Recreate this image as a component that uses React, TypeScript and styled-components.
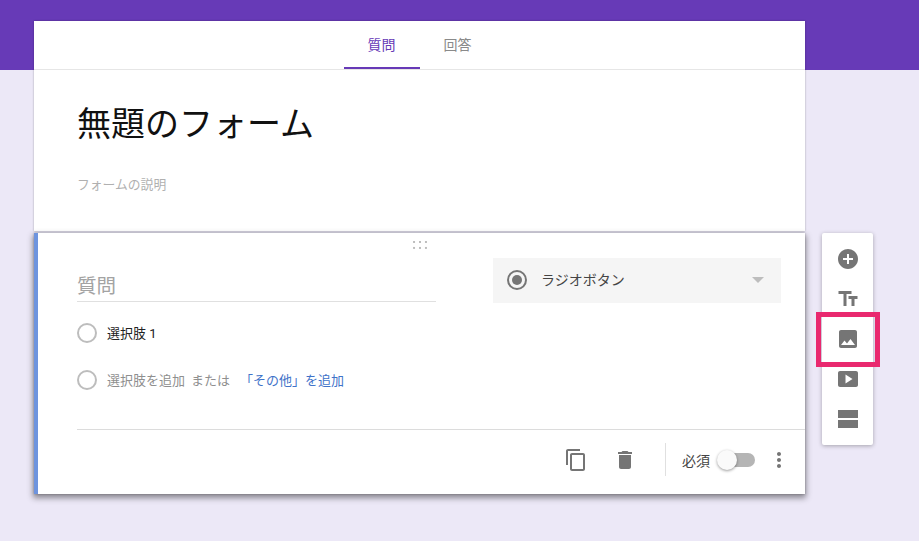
import React from 'react';
import styled, { createGlobalStyle } from 'styled-components';

const GlobalStyle = createGlobalStyle`
  html, body {
    margin: 0;
    height: 100%;
    overflow: hidden;
  }
  body {
    background: linear-gradient(#673ab7 70px, #ece8f7 70px);
    font-family: Roboto, "Noto Sans CJK JP", sans-serif;
  }
`;

const Page = styled.div`
  display: flex;
  align-items: flex-start;
  gap: 17px;
  padding: 21px 0 0 34px;
`;

const Column = styled.main`
  display: flex;
  flex-direction: column;
  width: 771px;
`;

const HeaderCard = styled.section`
  height: 210px;
  background: #fff;
  box-shadow: 0 0 2px rgba(0, 0, 0, 0.3);
`;

const Tabs = styled.nav`
  display: flex;
  justify-content: center;
  height: 48px;
  border-bottom: 1px solid #e6e6e6;
`;

const Tab = styled.div<{ $active?: boolean }>`
  display: flex;
  align-items: center;
  justify-content: center;
  width: 76px;
  height: 46px;
  margin-bottom: -1px;
  font-size: 14px;
  color: ${(p) => (p.$active ? '#673ab7' : '#8a8a8a')};
  border-bottom: 2px solid ${(p) => (p.$active ? '#673ab7' : 'transparent')};
`;

const HeaderBody = styled.div`
  padding: 26px 0 0 43px;
`;

const Title = styled.h1`
  margin: 0;
  font-size: 34px;
  font-weight: 400;
  line-height: 56px;
  color: #111;
`;

const Description = styled.p`
  margin: 24px 0 0;
  font-size: 12.8px;
  line-height: 18px;
  color: #b0b0b0;
`;

const QuestionCard = styled.section`
  height: 261px;
  margin-top: 2px;
  box-sizing: border-box;
  background: #fff;
  border-left: 4px solid #6e94de;
  box-shadow: 0 3px 6px 1px rgba(0, 0, 0, 0.42), 0 0 2px rgba(0, 0, 0, 0.25);
  display: flex;
  flex-direction: column;
`;

const Handle = styled.svg`
  display: block;
  align-self: center;
  width: 16px;
  height: 10px;
  margin: 7px 0 0 -3px;
`;

const QuestionBody = styled.div`
  display: flex;
  justify-content: space-between;
  padding: 8px 24px 0 39px;
  height: 180px;
  box-sizing: border-box;
`;

const Left = styled.div`
  width: 359px;
`;

const QuestionInput = styled.div`
  height: 30px;
  margin-top: 8px;
  padding-top: 5px;
  border-bottom: 1px solid #e0e0e0;
  font-size: 19.5px;
  line-height: 31px;
  color: #a3a3a3;
`;

const Option = styled.div<{ $top: number }>`
  display: flex;
  align-items: center;
  gap: 10px;
  height: 24px;
  margin-top: ${(p) => p.$top}px;
  font-size: 13px;
  color: #222;
  white-space: nowrap;
`;

const Radio = styled.span`
  display: block;
  flex: none;
  width: 16px;
  height: 16px;
  border: 2px solid #bdbdbd;
  border-radius: 50%;
`;

const Muted = styled.span<{ $gap?: number }>`
  color: #8f8f8f;
  margin-right: ${(p) => p.$gap ?? 0}px;
`;

const LinkText = styled.span`
  color: #3f73c9;
`;

const TypeSelect = styled.div`
  display: flex;
  align-items: center;
  width: 288px;
  height: 45px;
  padding: 0 17px 0 14px;
  box-sizing: border-box;
  background: #f5f5f5;
  font-size: 14px;
  color: #444;
`;

const SelectedRadio = styled.span`
  position: relative;
  flex: none;
  width: 16px;
  height: 16px;
  margin-right: 14px;
  border: 2px solid #757575;
  border-radius: 50%;

  &::after {
    content: '';
    position: absolute;
    inset: 3px;
    background: #757575;
    border-radius: 50%;
  }
`;

const SelectLabel = styled.span`
  flex: 1;
  margin-bottom: 3px;
`;

const Caret = styled.span`
  width: 0;
  height: 0;
  margin-bottom: 1px;
  border-left: 6.5px solid transparent;
  border-right: 6.5px solid transparent;
  border-top: 6.5px solid #bdbdbd;
`;

const Footer = styled.div`
  display: flex;
  align-items: center;
  justify-content: flex-end;
  height: 61px;
  margin-left: 39px;
  padding: 0 14px 4px 0;
  border-top: 1px solid #dcdcdc;
`;

const IconSlot = styled.span<{ $right: number }>`
  display: flex;
  margin-right: ${(p) => p.$right}px;
  color: #757575;
`;

const Separator = styled.span`
  width: 1px;
  height: 33px;
  margin-right: 16px;
  background: #e0e0e0;
`;

const RequiredLabel = styled.span`
  font-size: 14px;
  color: #444;
  margin-right: 8px;
`;

const Toggle = styled.span`
  position: relative;
  display: block;
  width: 34px;
  height: 14px;
  margin: 1px 12px 0 3px;
  background: #b5b5b5;
  border-radius: 7px;

  &::after {
    content: '';
    position: absolute;
    left: -4px;
    top: -3px;
    width: 20px;
    height: 20px;
    background: #fafafa;
    border-radius: 50%;
    box-shadow: 0 1px 3px rgba(0, 0, 0, 0.4);
  }
`;

const Toolbar = styled.aside`
  display: flex;
  flex-direction: column;
  width: 51px;
  margin-top: 212px;
  padding: 6px 0;
  background: #fff;
  border-radius: 2px;
  box-shadow: 0 1px 4px rgba(0, 0, 0, 0.3);
`;

const ToolButton = styled.div<{ $marked?: boolean }>`
  position: relative;
  display: flex;
  align-items: center;
  justify-content: center;
  height: 40px;
  color: #757575;

  ${(p) =>
    p.$marked &&
    `
    &::after {
      content: '';
      position: absolute;
      left: -6px;
      right: -7px;
      top: -7px;
      bottom: -8px;
      border: 5px solid #e9296f;
    }
  `}
`;

const Icon = ({ d, size = 24 }: { d: string; size?: number }) => (
  <svg width={size} height={size} viewBox="0 0 24 24" fill="currentColor">
    <path d={d} />
  </svg>
);

const paths = {
  add: 'M12 2C6.48 2 2 6.48 2 12s4.48 10 10 10 10-4.48 10-10S17.52 2 12 2zm5 11h-4v4h-2v-4H7v-2h4V7h2v4h4v2z',
  title: 'M2.5 4v3h5v12h3V7h5V4h-13zm19 5h-9v3h3v7h3v-7h3V9z',
  image: 'M21 19V5c0-1.1-.9-2-2-2H5c-1.1 0-2 .9-2 2v14c0 1.1.9 2 2 2h14c1.1 0 2-.9 2-2zM8.5 13.5l2.5 3.01L14.5 12l4.5 6H5l3.5-4.5z',
  video: 'M20 4H4c-1.1 0-2 .9-2 2v12c0 1.1.9 2 2 2h16c1.1 0 2-.9 2-2V6c0-1.1-.9-2-2-2zM9.5 16.5v-9l7 4.5-7 4.5z',
  section: 'M2 3h20v8H2zM2 13h20v8H2z',
  copy: 'M16 1H4c-1.1 0-2 .9-2 2v14h2V3h12V1zm3 4H8c-1.1 0-2 .9-2 2v14c0 1.1.9 2 2 2h11c1.1 0 2-.9 2-2V7c0-1.1-.9-2-2-2zm0 16H8V7h11v14z',
  trash: 'M6 19c0 1.1.9 2 2 2h8c1.1 0 2-.9 2-2V7H6v12zM19 4h-3.5l-1-1h-5l-1 1H5v2h14V4z',
  more: 'M12 8c1.1 0 2-.9 2-2s-.9-2-2-2-2 .9-2 2 .9 2 2 2zm0 2c-1.1 0-2 .9-2 2s.9 2 2 2 2-.9 2-2-.9-2-2-2zm0 6c-1.1 0-2 .9-2 2s.9 2 2 2 2-.9 2-2-.9-2-2-2z',
};

const App: React.FC = () => {
  return (
    <>
      <GlobalStyle />
      <Page>
        <Column>
          <HeaderCard>
            <Tabs>
              <Tab $active>質問</Tab>
              <Tab>回答</Tab>
            </Tabs>
            <HeaderBody>
              <Title>無題のフォーム</Title>
              <Description>フォームの説明</Description>
            </HeaderBody>
          </HeaderCard>

          <QuestionCard>
            <Handle viewBox="0 0 16 10" fill="#bdbdbd">
              {[0, 6, 12].map((x) =>
                [0, 6].map((y) => <rect key={`${x}-${y}`} x={x + 1} y={y + 1} width="2" height="2" />),
              )}
            </Handle>
            <QuestionBody>
              <Left>
                <QuestionInput>質問</QuestionInput>
                <Option $top={19}>
                  <Radio />
                  選択肢 1
                </Option>
                <Option $top={23}>
                  <Radio />
                  <span>
                    <Muted $gap={6}>選択肢を追加</Muted>
                    <Muted $gap={10}>または</Muted>
                    <LinkText>「その他」を追加</LinkText>
                  </span>
                </Option>
              </Left>
              <TypeSelect>
                <SelectedRadio />
                <SelectLabel>ラジオボタン</SelectLabel>
                <Caret />
              </TypeSelect>
            </QuestionBody>
            <Footer>
              <IconSlot $right={25}>
                <Icon d={paths.copy} />
              </IconSlot>
              <IconSlot $right={28}>
                <Icon d={paths.trash} />
              </IconSlot>
              <Separator />
              <RequiredLabel>必須</RequiredLabel>
              <Toggle />
              <IconSlot $right={0}>
                <Icon d={paths.more} />
              </IconSlot>
            </Footer>
          </QuestionCard>
        </Column>

        <Toolbar>
          <ToolButton>
            <Icon d={paths.add} />
          </ToolButton>
          <ToolButton>
            <Icon d={paths.title} />
          </ToolButton>
          <ToolButton $marked>
            <Icon d={paths.image} />
          </ToolButton>
          <ToolButton>
            <Icon d={paths.video} />
          </ToolButton>
          <ToolButton>
            <Icon d={paths.section} />
          </ToolButton>
        </Toolbar>
      </Page>
    </>
  );
};

export default App;
